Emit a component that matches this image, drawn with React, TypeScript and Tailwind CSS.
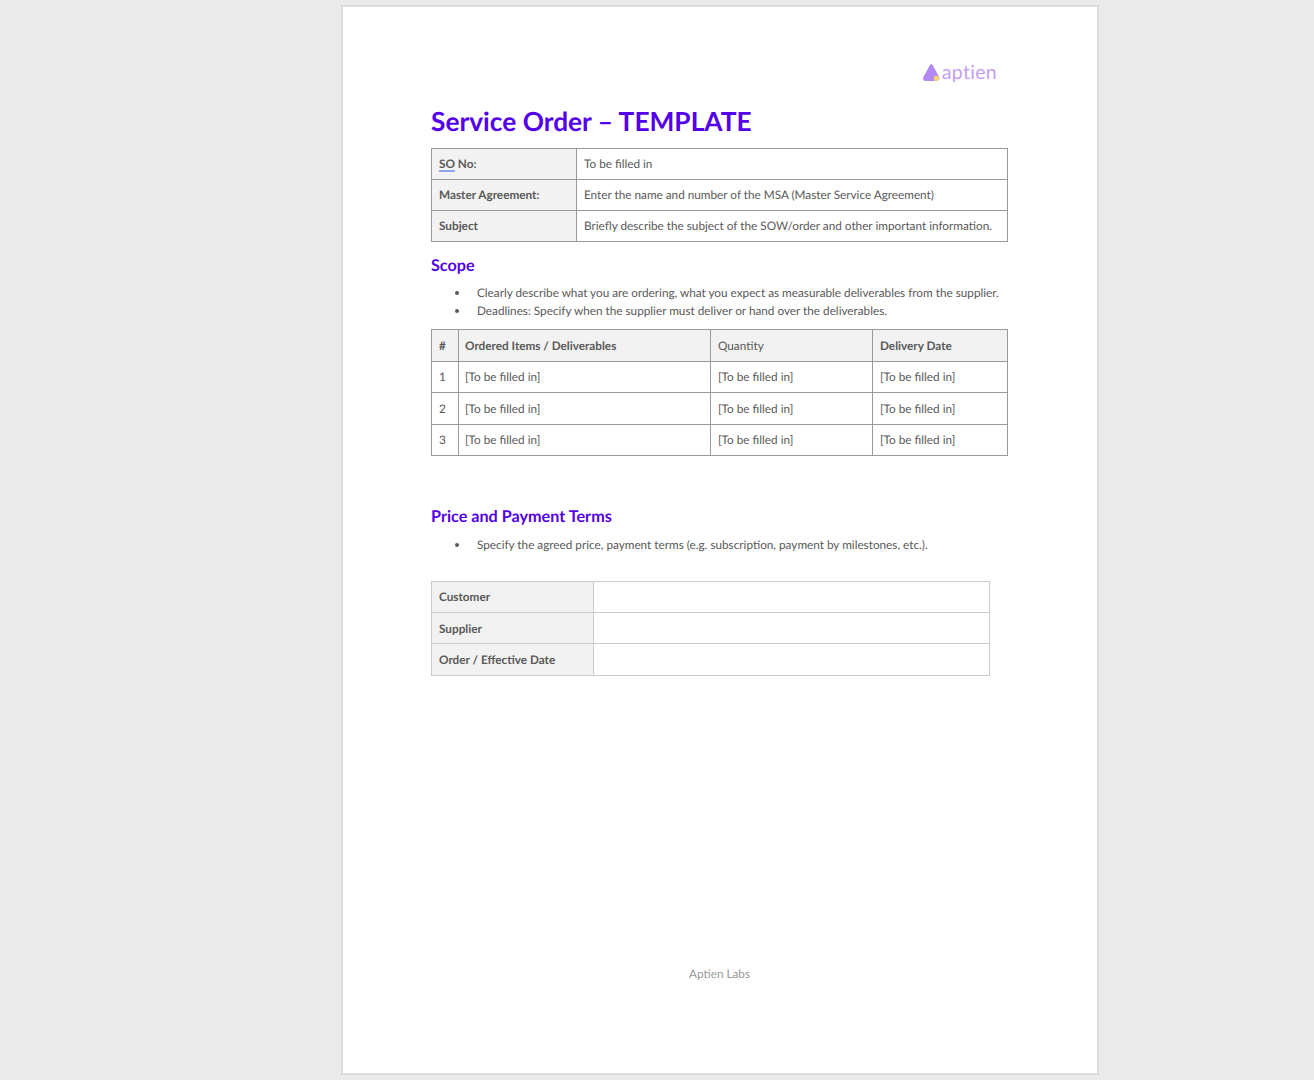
const font = "font-['Lato','Noto_Sans',sans-serif] [text-rendering:geometricPrecision]";

const infoRows = [
  { label: "Master Agreement:", value: "Enter the name and number of the MSA (Master Service Agreement)" },
  { label: "Subject", value: "Briefly describe the subject of the SOW/order and other important information." },
];

const orderRows = ["1", "2", "3"];
const signRows = ["Customer", "Supplier", "Order / Effective Date"];

function Logo() {
  return (
    <div className="flex h-[22px] items-center justify-end pr-[11px]">
      <svg width="18" height="19" viewBox="0 0 18 19" className="mr-[1px]">
        <path d="M6.800 1.300c.9-1.300 2.300-1.300 3.100.1l6.300 11.600c.8 1.600.1 3.100-1.700 3.400-3.400.6-7.400.8-11.700.5-2.200-.2-3.200-1.600-2.600-3.400z" fill="#b388f5" />
        <circle cx="13.400" cy="14.400" r="2.600" fill="#f5d76e" />
      </svg>
      <span className={`${font} text-[19.500px] leading-none tracking-[0.3px] text-[#c39df6]`}>aptien</span>
    </div>
  );
}

function Bullet({ children }: { children: React.ReactNode }) {
  return (
    <li className="flex h-[18px] items-center pl-[24px]">
      <span className="h-[4px] w-[4px] shrink-0 rounded-full bg-[#595959]" />
      <span className="ml-[18px] whitespace-nowrap">{children}</span>
    </li>
  );
}

export default function App() {
  return (
    <div className={`${font} min-h-[1080px] bg-[#ebebeb] pt-[5px] text-[11.750px] text-[#595959]`}>
      <div className="ml-[341px] h-[1070px] w-[758px] border-2 border-[#dcdcdc] bg-white pl-[88px] pr-[89px] pt-[55px]">
        <Logo />
        <h1 className="mt-[21px] h-[33px] text-[26.300px] font-bold leading-[33px] text-[#5300eb]">
          Service Order – TEMPLATE
        </h1>

        <table className="mt-[10px] w-[577px] table-fixed border-collapse border border-[#9a9a9a]">
          <colgroup>
            <col className="w-[145px]" />
            <col />
          </colgroup>
          <tbody>
            <tr className="h-[31px]">
              <td className="border border-[#9a9a9a] bg-[#f2f2f2] pl-[7px] font-bold">
                <span className="underline decoration-[#8ea6e8] decoration-2 underline-offset-2">SO</span> No:
              </td>
              <td className="border border-[#9a9a9a] pl-[7px]">To be filled in</td>
            </tr>
            {infoRows.map((row) => (
              <tr key={row.label} className="h-[31px]">
                <td className="border border-[#9a9a9a] bg-[#f2f2f2] pl-[7px] font-bold">{row.label}</td>
                <td className="border border-[#9a9a9a] pl-[7px]">{row.value}</td>
              </tr>
            ))}
          </tbody>
        </table>

        <h2 className="mt-[13px] h-[22px] text-[16.200px] font-bold leading-[22px] text-[#5300eb]">Scope</h2>
        <ul className="mt-[7px]">
          <Bullet>Clearly describe what you are ordering, what you expect as measurable deliverables from the supplier.</Bullet>
          <Bullet>Deadlines: Specify when the supplier must deliver or hand over the deliverables.</Bullet>
        </ul>

        <table className="mt-[9px] w-[577px] table-fixed border-collapse border border-[#9a9a9a]">
          <colgroup>
            <col className="w-[27px]" />
            <col className="w-[252px]" />
            <col className="w-[162px]" />
            <col />
          </colgroup>
          <tbody>
            <tr className="h-[32px] bg-[#f2f2f2]">
              <td className="border border-[#9a9a9a] pl-[7px] font-bold">#</td>
              <td className="border border-[#9a9a9a] pl-[6px] font-bold">Ordered Items / Deliverables</td>
              <td className="border border-[#9a9a9a] pl-[7px]">Quantity</td>
              <td className="border border-[#9a9a9a] pl-[7px] font-bold">Delivery Date</td>
            </tr>
            {orderRows.map((n) => (
              <tr key={n} className="h-[31.300px]">
                <td className="border border-[#9a9a9a] pl-[7px]">{n}</td>
                <td className="border border-[#9a9a9a] pl-[6px]">[To be filled in]</td>
                <td className="border border-[#9a9a9a] pl-[7px]">[To be filled in]</td>
                <td className="border border-[#9a9a9a] pl-[7px]">[To be filled in]</td>
              </tr>
            ))}
          </tbody>
        </table>

        <h2 className="mt-[50px] h-[22px] text-[16.200px] font-bold leading-[22px] text-[#5300eb]">Price and Payment Terms</h2>
        <ul className="mt-[8px]">
          <Bullet>Specify the agreed price, payment terms (e.g. subscription, payment by milestones, etc.).</Bullet>
        </ul>

        <table className="mt-[27px] w-[559px] table-fixed border-collapse border border-[#cccccc]">
          <colgroup>
            <col className="w-[162px]" />
            <col />
          </colgroup>
          <tbody>
            {signRows.map((label) => (
              <tr key={label} className="h-[31.300px]">
                <td className="border border-[#cccccc] bg-[#f2f2f2] pl-[7px] font-bold">{label}</td>
                <td className="border border-[#cccccc]" />
              </tr>
            ))}
          </tbody>
        </table>

        <p className="mt-[289px] text-center text-[#999999]">Aptien Labs</p>
      </div>
    </div>
  );
}
